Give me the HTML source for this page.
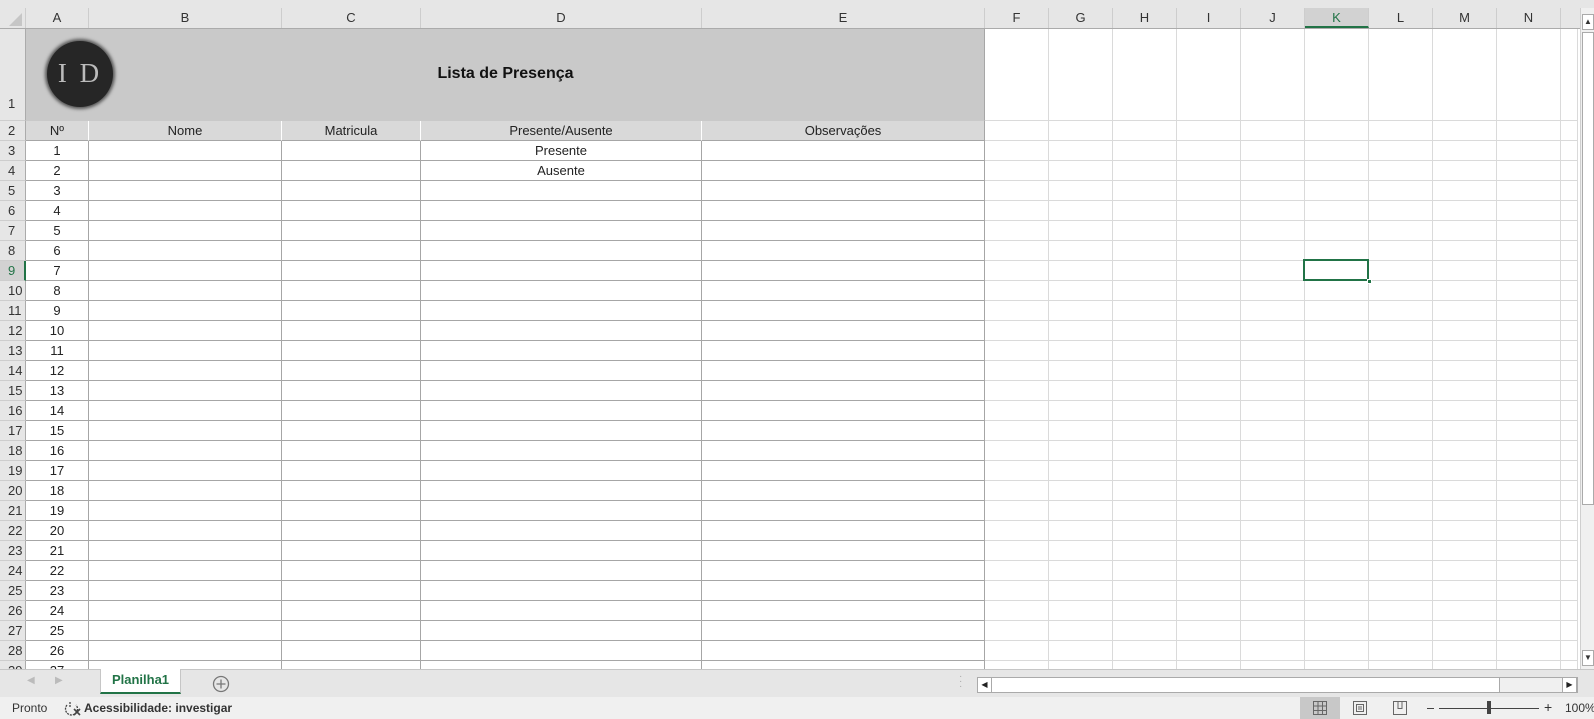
<!DOCTYPE html>
<html><head><meta charset="utf-8"><style>
*{box-sizing:border-box;margin:0;padding:0}
body{width:1594px;height:719px;overflow:hidden;background:#fff;font-family:"Liberation Sans",sans-serif;font-size:13px;color:#222;position:relative}
.top{position:absolute;left:0;top:0;width:1594px;height:8px;background:#e6e6e6}
.hdr{position:absolute;left:0;top:8px;height:21px;display:flex;background:#e6e6e6;border-bottom:1px solid #ababab}
.hdr div{border-right:1px solid #cdcdcd;text-align:center;line-height:20px;font-size:13px;color:#333}
.row{display:flex;height:20px}
.row>div{border-right:1px solid #dadada;border-bottom:1px solid #dadada;height:20px;line-height:19px;text-align:center}
.row>div.rh{background:#e6e6e6;border-right:1px solid #ababab;border-bottom:1px solid #cdcdcd;text-align:left;padding-left:8px;color:#333}
.row>div.t{border-color:#a6a6a6}
.grid{position:absolute;left:0;top:29px;width:1578px}
.w0{width:26px}.wA{width:63px}.wB{width:193px}.wC{width:139px}.wD{width:281px}.wE{width:283px}.wF{width:64px}.wZ{width:17px}
.r1{height:92px}
.r1>div{height:92px}
.r1 .rh{line-height:150px}
.merge{width:959px;background:#c9c9c9;border-right:1px solid #a6a6a6!important;border-bottom:1px solid #c9c9c9!important;position:relative}
.r2>div.h{background:#d9d9d9;border-right:1px solid #fff;border-bottom:1px solid #a6a6a6}
.tabs{position:absolute;left:0;top:669px;width:1594px;height:28px;background:#e6e6e6;border-top:1px solid #c6c6c6}
.status{position:absolute;left:0;top:697px;width:1594px;height:22px;background:#f0f0f0;font-size:12px;color:#333}
.vs{position:absolute;left:1580px;top:8px;width:14px;height:661px;background:#f0f0f0;border-left:1px solid #cfcfcf}
</style></head><body>
<div class="top"></div>
<div class="hdr">
<div style="width:26px;position:relative"><svg width="20" height="18" style="position:absolute;left:4px;top:1px"><polygon points="18,4 18,17 5,17" fill="#c6c6c6"/></svg></div>
<div class="wA">A</div><div class="wB">B</div><div class="wC">C</div><div class="wD">D</div><div class="wE">E</div>
<div class="wF">F</div><div class="wF">G</div><div class="wF">H</div><div class="wF">I</div><div class="wF">J</div>
<div class="wF" style="background:#d2d2d2;border-bottom:2px solid #217346;color:#217346">K</div><div class="wF">L</div><div class="wF">M</div><div class="wF">N</div><div style="width:19px;border:none"></div>
</div>
<div class="grid">
<div class="row r1"><div class="rh w0">1</div><div class="merge">
<div style="position:absolute;left:21px;top:12px;width:66px;height:66px;border-radius:50%;background:#262626;box-shadow:0 0 3px 2px #555;text-align:center;line-height:64px;font-family:'Liberation Serif',serif;font-size:27px;color:#bbb;letter-spacing:3px">I D</div>
<div style="position:absolute;left:0;width:959px;top:35px;text-align:center;font-weight:bold;font-size:16px;color:#111">Lista de Presença</div>
</div><div class="wF"></div><div class="wF"></div><div class="wF"></div><div class="wF"></div><div class="wF"></div><div class="wF"></div><div class="wF"></div><div class="wF"></div><div class="wF"></div><div class="wZ"></div></div>
<div class="row r2"><div class="rh w0">2</div><div class="h wA">Nº</div><div class="h wB">Nome</div><div class="h wC">Matricula</div><div class="h wD">Presente/Ausente</div><div class="h wE" style="border-right-color:#a6a6a6">Observações</div><div class="wF"></div><div class="wF"></div><div class="wF"></div><div class="wF"></div><div class="wF"></div><div class="wF"></div><div class="wF"></div><div class="wF"></div><div class="wF"></div><div class="wZ"></div></div>
<div class="row"><div class="rh w0">3</div><div class="t wA">1</div><div class="t wB"></div><div class="t wC"></div><div class="t wD">Presente</div><div class="t wE"></div><div class="wF"></div><div class="wF"></div><div class="wF"></div><div class="wF"></div><div class="wF"></div><div class="wF"></div><div class="wF"></div><div class="wF"></div><div class="wF"></div><div class="wZ"></div></div>
<div class="row"><div class="rh w0">4</div><div class="t wA">2</div><div class="t wB"></div><div class="t wC"></div><div class="t wD">Ausente</div><div class="t wE"></div><div class="wF"></div><div class="wF"></div><div class="wF"></div><div class="wF"></div><div class="wF"></div><div class="wF"></div><div class="wF"></div><div class="wF"></div><div class="wF"></div><div class="wZ"></div></div>
<div class="row"><div class="rh w0">5</div><div class="t wA">3</div><div class="t wB"></div><div class="t wC"></div><div class="t wD"></div><div class="t wE"></div><div class="wF"></div><div class="wF"></div><div class="wF"></div><div class="wF"></div><div class="wF"></div><div class="wF"></div><div class="wF"></div><div class="wF"></div><div class="wF"></div><div class="wZ"></div></div>
<div class="row"><div class="rh w0">6</div><div class="t wA">4</div><div class="t wB"></div><div class="t wC"></div><div class="t wD"></div><div class="t wE"></div><div class="wF"></div><div class="wF"></div><div class="wF"></div><div class="wF"></div><div class="wF"></div><div class="wF"></div><div class="wF"></div><div class="wF"></div><div class="wF"></div><div class="wZ"></div></div>
<div class="row"><div class="rh w0">7</div><div class="t wA">5</div><div class="t wB"></div><div class="t wC"></div><div class="t wD"></div><div class="t wE"></div><div class="wF"></div><div class="wF"></div><div class="wF"></div><div class="wF"></div><div class="wF"></div><div class="wF"></div><div class="wF"></div><div class="wF"></div><div class="wF"></div><div class="wZ"></div></div>
<div class="row"><div class="rh w0">8</div><div class="t wA">6</div><div class="t wB"></div><div class="t wC"></div><div class="t wD"></div><div class="t wE"></div><div class="wF"></div><div class="wF"></div><div class="wF"></div><div class="wF"></div><div class="wF"></div><div class="wF"></div><div class="wF"></div><div class="wF"></div><div class="wF"></div><div class="wZ"></div></div>
<div class="row"><div class="rh w0" style="background:#d2d2d2;border-right:2px solid #217346;color:#217346">9</div><div class="t wA">7</div><div class="t wB"></div><div class="t wC"></div><div class="t wD"></div><div class="t wE"></div><div class="wF"></div><div class="wF"></div><div class="wF"></div><div class="wF"></div><div class="wF"></div><div class="wF" style="position:relative"><div style="position:absolute;left:-2px;top:-2px;width:66px;height:22px;border:2px solid #217346"></div><div style="position:absolute;right:-4px;bottom:-4px;width:5px;height:5px;background:#217346;border:1px solid #fff"></div></div><div class="wF"></div><div class="wF"></div><div class="wF"></div><div class="wZ"></div></div>
<div class="row"><div class="rh w0">10</div><div class="t wA">8</div><div class="t wB"></div><div class="t wC"></div><div class="t wD"></div><div class="t wE"></div><div class="wF"></div><div class="wF"></div><div class="wF"></div><div class="wF"></div><div class="wF"></div><div class="wF"></div><div class="wF"></div><div class="wF"></div><div class="wF"></div><div class="wZ"></div></div>
<div class="row"><div class="rh w0">11</div><div class="t wA">9</div><div class="t wB"></div><div class="t wC"></div><div class="t wD"></div><div class="t wE"></div><div class="wF"></div><div class="wF"></div><div class="wF"></div><div class="wF"></div><div class="wF"></div><div class="wF"></div><div class="wF"></div><div class="wF"></div><div class="wF"></div><div class="wZ"></div></div>
<div class="row"><div class="rh w0">12</div><div class="t wA">10</div><div class="t wB"></div><div class="t wC"></div><div class="t wD"></div><div class="t wE"></div><div class="wF"></div><div class="wF"></div><div class="wF"></div><div class="wF"></div><div class="wF"></div><div class="wF"></div><div class="wF"></div><div class="wF"></div><div class="wF"></div><div class="wZ"></div></div>
<div class="row"><div class="rh w0">13</div><div class="t wA">11</div><div class="t wB"></div><div class="t wC"></div><div class="t wD"></div><div class="t wE"></div><div class="wF"></div><div class="wF"></div><div class="wF"></div><div class="wF"></div><div class="wF"></div><div class="wF"></div><div class="wF"></div><div class="wF"></div><div class="wF"></div><div class="wZ"></div></div>
<div class="row"><div class="rh w0">14</div><div class="t wA">12</div><div class="t wB"></div><div class="t wC"></div><div class="t wD"></div><div class="t wE"></div><div class="wF"></div><div class="wF"></div><div class="wF"></div><div class="wF"></div><div class="wF"></div><div class="wF"></div><div class="wF"></div><div class="wF"></div><div class="wF"></div><div class="wZ"></div></div>
<div class="row"><div class="rh w0">15</div><div class="t wA">13</div><div class="t wB"></div><div class="t wC"></div><div class="t wD"></div><div class="t wE"></div><div class="wF"></div><div class="wF"></div><div class="wF"></div><div class="wF"></div><div class="wF"></div><div class="wF"></div><div class="wF"></div><div class="wF"></div><div class="wF"></div><div class="wZ"></div></div>
<div class="row"><div class="rh w0">16</div><div class="t wA">14</div><div class="t wB"></div><div class="t wC"></div><div class="t wD"></div><div class="t wE"></div><div class="wF"></div><div class="wF"></div><div class="wF"></div><div class="wF"></div><div class="wF"></div><div class="wF"></div><div class="wF"></div><div class="wF"></div><div class="wF"></div><div class="wZ"></div></div>
<div class="row"><div class="rh w0">17</div><div class="t wA">15</div><div class="t wB"></div><div class="t wC"></div><div class="t wD"></div><div class="t wE"></div><div class="wF"></div><div class="wF"></div><div class="wF"></div><div class="wF"></div><div class="wF"></div><div class="wF"></div><div class="wF"></div><div class="wF"></div><div class="wF"></div><div class="wZ"></div></div>
<div class="row"><div class="rh w0">18</div><div class="t wA">16</div><div class="t wB"></div><div class="t wC"></div><div class="t wD"></div><div class="t wE"></div><div class="wF"></div><div class="wF"></div><div class="wF"></div><div class="wF"></div><div class="wF"></div><div class="wF"></div><div class="wF"></div><div class="wF"></div><div class="wF"></div><div class="wZ"></div></div>
<div class="row"><div class="rh w0">19</div><div class="t wA">17</div><div class="t wB"></div><div class="t wC"></div><div class="t wD"></div><div class="t wE"></div><div class="wF"></div><div class="wF"></div><div class="wF"></div><div class="wF"></div><div class="wF"></div><div class="wF"></div><div class="wF"></div><div class="wF"></div><div class="wF"></div><div class="wZ"></div></div>
<div class="row"><div class="rh w0">20</div><div class="t wA">18</div><div class="t wB"></div><div class="t wC"></div><div class="t wD"></div><div class="t wE"></div><div class="wF"></div><div class="wF"></div><div class="wF"></div><div class="wF"></div><div class="wF"></div><div class="wF"></div><div class="wF"></div><div class="wF"></div><div class="wF"></div><div class="wZ"></div></div>
<div class="row"><div class="rh w0">21</div><div class="t wA">19</div><div class="t wB"></div><div class="t wC"></div><div class="t wD"></div><div class="t wE"></div><div class="wF"></div><div class="wF"></div><div class="wF"></div><div class="wF"></div><div class="wF"></div><div class="wF"></div><div class="wF"></div><div class="wF"></div><div class="wF"></div><div class="wZ"></div></div>
<div class="row"><div class="rh w0">22</div><div class="t wA">20</div><div class="t wB"></div><div class="t wC"></div><div class="t wD"></div><div class="t wE"></div><div class="wF"></div><div class="wF"></div><div class="wF"></div><div class="wF"></div><div class="wF"></div><div class="wF"></div><div class="wF"></div><div class="wF"></div><div class="wF"></div><div class="wZ"></div></div>
<div class="row"><div class="rh w0">23</div><div class="t wA">21</div><div class="t wB"></div><div class="t wC"></div><div class="t wD"></div><div class="t wE"></div><div class="wF"></div><div class="wF"></div><div class="wF"></div><div class="wF"></div><div class="wF"></div><div class="wF"></div><div class="wF"></div><div class="wF"></div><div class="wF"></div><div class="wZ"></div></div>
<div class="row"><div class="rh w0">24</div><div class="t wA">22</div><div class="t wB"></div><div class="t wC"></div><div class="t wD"></div><div class="t wE"></div><div class="wF"></div><div class="wF"></div><div class="wF"></div><div class="wF"></div><div class="wF"></div><div class="wF"></div><div class="wF"></div><div class="wF"></div><div class="wF"></div><div class="wZ"></div></div>
<div class="row"><div class="rh w0">25</div><div class="t wA">23</div><div class="t wB"></div><div class="t wC"></div><div class="t wD"></div><div class="t wE"></div><div class="wF"></div><div class="wF"></div><div class="wF"></div><div class="wF"></div><div class="wF"></div><div class="wF"></div><div class="wF"></div><div class="wF"></div><div class="wF"></div><div class="wZ"></div></div>
<div class="row"><div class="rh w0">26</div><div class="t wA">24</div><div class="t wB"></div><div class="t wC"></div><div class="t wD"></div><div class="t wE"></div><div class="wF"></div><div class="wF"></div><div class="wF"></div><div class="wF"></div><div class="wF"></div><div class="wF"></div><div class="wF"></div><div class="wF"></div><div class="wF"></div><div class="wZ"></div></div>
<div class="row"><div class="rh w0">27</div><div class="t wA">25</div><div class="t wB"></div><div class="t wC"></div><div class="t wD"></div><div class="t wE"></div><div class="wF"></div><div class="wF"></div><div class="wF"></div><div class="wF"></div><div class="wF"></div><div class="wF"></div><div class="wF"></div><div class="wF"></div><div class="wF"></div><div class="wZ"></div></div>
<div class="row"><div class="rh w0">28</div><div class="t wA">26</div><div class="t wB"></div><div class="t wC"></div><div class="t wD"></div><div class="t wE"></div><div class="wF"></div><div class="wF"></div><div class="wF"></div><div class="wF"></div><div class="wF"></div><div class="wF"></div><div class="wF"></div><div class="wF"></div><div class="wF"></div><div class="wZ"></div></div>
<div class="row"><div class="rh w0">29</div><div class="t wA">27</div><div class="t wB"></div><div class="t wC"></div><div class="t wD"></div><div class="t wE"></div><div class="wF"></div><div class="wF"></div><div class="wF"></div><div class="wF"></div><div class="wF"></div><div class="wF"></div><div class="wF"></div><div class="wF"></div><div class="wF"></div><div class="wZ"></div></div>
</div>
<div class="vs">
<div style="position:absolute;left:1px;top:6px;width:12px;height:16px;background:#fff;border:1px solid #aaa;font-size:8px;text-align:center;line-height:14px;color:#333">▲</div>
<div style="position:absolute;left:1px;top:24px;width:12px;height:473px;background:#fff;border:1px solid #aaa"></div>
<div style="position:absolute;left:1px;top:642px;width:12px;height:16px;background:#fff;border:1px solid #aaa;font-size:8px;text-align:center;line-height:14px;color:#333">▼</div>
</div>
<div class="tabs">
<span style="position:absolute;left:27px;top:5px;color:#bbb;font-size:10px">◀</span>
<span style="position:absolute;left:55px;top:5px;color:#bbb;font-size:10px">▶</span>
<div style="position:absolute;left:100px;top:-1px;width:81px;height:25px;background:#fff;border:1px solid #c6c6c6;border-top:none;border-bottom:2px solid #217346;text-align:center;font-weight:bold;color:#217346;font-size:13px;line-height:22px">Planilha1</div>
<svg style="position:absolute;left:212px;top:5px" width="18" height="18"><circle cx="9" cy="9" r="7.5" fill="none" stroke="#777" stroke-width="1.3"/><path d="M9 4.5V13.5M4.5 9H13.5" stroke="#777" stroke-width="1.3"/></svg>
<span style="position:absolute;left:959px;top:4px;color:#aaa;font-size:10px;line-height:5px">·<br>·<br>·</span>
<div style="position:absolute;left:977px;top:7px;width:601px;height:16px;background:#fff;border:1px solid #aaa">
<div style="position:absolute;left:0;top:0;width:14px;height:14px;border-right:1px solid #aaa;font-size:8px;line-height:14px;text-align:center">◀</div>
<div style="position:absolute;left:14px;top:0;width:508px;height:14px;border-right:1px solid #aaa"></div>
<div style="position:absolute;left:522px;top:0;width:63px;height:14px;background:#f0f0f0"></div>
<div style="position:absolute;right:0;top:-1px;width:15px;height:16px;border:1px solid #aaa;background:#fff;font-size:8px;line-height:14px;text-align:center">▶</div>
</div>
</div>
<div class="status">
<span style="position:absolute;left:12px;top:4px">Pronto</span>
<svg style="position:absolute;left:64px;top:3px" width="18" height="16"><path d="M6 2v6M3 5a6 6 0 1 0 9 0" fill="none" stroke="#444" stroke-width="1.3" stroke-dasharray="2 1"/><path d="M10 9l6 6M16 9l-6 6" stroke="#444" stroke-width="1.6"/></svg>
<span style="position:absolute;left:84px;top:4px;font-weight:bold">Acessibilidade: investigar</span>
<div style="position:absolute;left:1300px;top:0;width:40px;height:22px;background:#c8c8c8"></div>
<svg style="position:absolute;left:1313px;top:4px" width="14" height="14"><path d="M.5 .5h13v13h-13zM.5 5h13M.5 9.5h13M5 .5v13M9.5 .5v13" fill="none" stroke="#666"/></svg>
<svg style="position:absolute;left:1353px;top:4px" width="14" height="14"><path d="M.5 .5h13v13h-13zM3.5 3.5h7v7h-7zM5 6h4M5 8h4" fill="none" stroke="#666"/></svg>
<svg style="position:absolute;left:1393px;top:4px" width="14" height="14"><path d="M.5 .5h13v13h-13zM5 .5v7h4v-7" fill="none" stroke="#666"/></svg>
<div style="position:absolute;left:1427px;top:11px;width:7px;height:1px;background:#444"></div>
<div style="position:absolute;left:1439px;top:11px;width:100px;height:1px;background:#444"></div>
<div style="position:absolute;left:1487px;top:4px;width:4px;height:13px;background:#444"></div>
<span style="position:absolute;left:1544px;top:2px;font-size:14px">+</span>
<span style="position:absolute;left:1565px;top:4px">100%</span>
</div>
</body></html>
